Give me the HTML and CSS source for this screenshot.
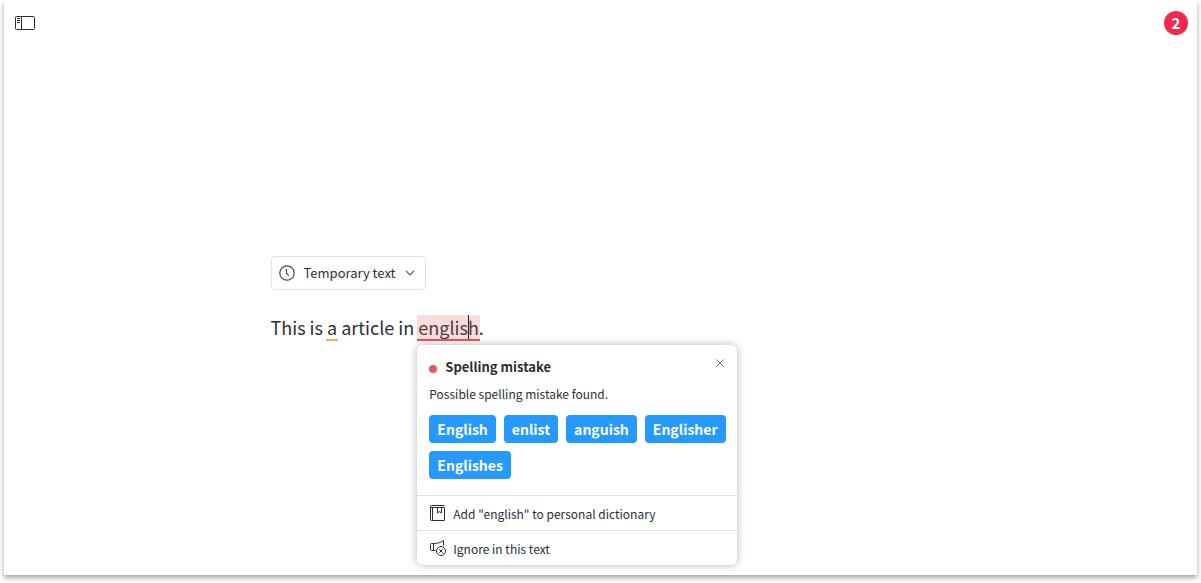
FILE: index.html
```html
<!DOCTYPE html>
<html lang="en">
<head>
    <meta charset="UTF-8">
    <meta name="viewport" content="width=device-width, initial-scale=1.0">
    <title>Temporary text</title>
    <link rel="stylesheet" href="styles.css">
</head>
<body>

    <div class="sheet">
        <header class="topbar">
            <button type="button" class="sidebar-btn" aria-label="Toggle sidebar">
                <svg width="20" height="14" viewBox="0 0 20 14" fill="none" stroke="#2b2f33">
                    <rect x="0.5" y="0.5" width="19" height="13" rx="1"/>
                    <path d="M6.5 0.5v13M2 2.5h3M2 4.5h3M2 6.5h3"/>
                </svg>
            </button>
            <button type="button" class="error-count" aria-label="2 mistakes">2</button>
        </header>

        <main class="editor">
            <button type="button" class="text-picker">
                <svg width="16" height="16" viewBox="0 0 16 16" fill="none" stroke="#45484d" stroke-width="1.2">
                    <circle cx="8" cy="8" r="7.2"/>
                    <path d="M7.5 4v4.2l2.3 2.4"/>
                </svg>
                <span class="picker-label">Temporary text</span>
                <svg width="10" height="6" viewBox="0 0 10 6" fill="none" stroke="#555" stroke-width="1.2">
                    <path d="M1 0.8l4 4 4-4"/>
                </svg>
            </button>

            <div class="text">
                This is <span class="mark grammar">a</span> article in <span class="word"><span class="mark spelling">englis<span class="caret"></span>h</span><section class="popover" aria-label="Spelling mistake">
                        <div class="popover-body">
                            <div class="popover-header">
                                <span class="dot"></span>
                                <h2>Spelling mistake</h2>
                                <button type="button" class="close-btn" aria-label="Close">
                                    <svg width="8" height="8" viewBox="0 0 8 8" fill="none" stroke="#777">
                                        <path d="M0.5 0.5l7 7M7.5 0.5l-7 7"/>
                                    </svg>
                                </button>
                            </div>
                            <p>Possible spelling mistake found.</p>
                            <div class="suggestions">
                                <button type="button">English</button>
                                <button type="button">enlist</button>
                                <button type="button">anguish</button>
                                <button type="button">Englisher</button>
                                <button type="button">Englishes</button>
                            </div>
                        </div>
                        <button type="button" class="action">
                            <svg width="16" height="16" viewBox="0 0 16 16" fill="none" stroke="#2b2f33">
                                <path d="M14.5 0.5h-13a1 1 0 0 0-1 1v13a1 1 0 0 0 1 1h13v-13h-13.500M2.500 2.500v13M7.500 2.500v5.500l2-1.500 2 1.500v-5.500"/>
                            </svg>
                            Add "english" to personal dictionary
                        </button>
                        <button type="button" class="action">
                            <svg width="16" height="16" viewBox="0 0 16 16" fill="none" stroke="#2b2f33">
                                <path d="M3.5 3.5h-2q-1 0-1 1v5q0 1 1 1h2zM3.5 3.5c4.500 0 7-1 10-3v5M3.500 10.500h2"/>
                                <circle cx="11" cy="11" r="4.500"/>
                                <path d="M9.200 9.200l3.600 3.600M12.800 9.200l-3.600 3.600"/>
                            </svg>
                            Ignore in this text
                        </button>
                    </section></span>.
            </div>
        </main>
    </div>

</body>
</html>
```
FILE: styles.css
```css
* {
    box-sizing: border-box;
}
body {
    margin: 0;
    padding: 0 4px 8px;
    min-height: 100vh;
    display: flex;
    background-color: #fff;
    color: #2b2f33;
    font-family: "Noto Sans CJK SC", "Noto Sans", sans-serif;
}
button {
    margin: 0;
    padding: 0;
    border: none;
    background: none;
    color: inherit;
    font-family: inherit;
    cursor: pointer;
}
svg {
    display: block;
    flex-shrink: 0;
}
.sheet {
    flex: 1;
    background-color: #fff;
    box-shadow: 0 3px 5px rgba(0, 0, 0, 0.35);
}
.topbar {
    display: flex;
    justify-content: space-between;
    align-items: center;
    height: 46px;
    padding: 0 9px 0 11px;
}
.error-count {
    width: 24px;
    height: 24px;
    border-radius: 50%;
    background-color: #f0284f;
    color: #fff;
    font-size: 15px;
    font-weight: bold;
    line-height: 24px;
}
.editor {
    max-width: 660px;
    margin: 0 auto;
    padding-top: 210px;
}
.text-picker {
    display: flex;
    align-items: center;
    height: 34px;
    padding: 0 10px 0 7px;
    border: 1px solid #dfe1ee;
    border-radius: 4px;
    font-size: 13px;
}
.picker-label {
    margin: 0 10px 0 9px;
    padding-bottom: 2px;
}
.text {
    margin-top: 25px;
    font-size: 18px;
    line-height: 24px;
}
.mark {
    display: inline-block;
    height: 26px;
    padding: 0 1px;
    margin: 0 -1px;
    line-height: 24px;
    vertical-align: top;
}
.grammar {
    border-bottom: 2px solid #f3b04a;
}
.spelling {
    background-color: #fbdcdc;
    border-bottom: 2px solid #e7555b;
    color: #523b40;
}
.caret {
    display: inline-block;
    width: 1px;
    height: 24px;
    margin-right: -1px;
    background-color: #222;
    vertical-align: top;
}
.word {
    position: relative;
}

/* Suggestion card under the marked word */
.popover {
    position: absolute;
    top: 100%;
    left: -1px;
    width: 320px;
    margin-top: 5px;
    border-radius: 6px;
    background-color: #fff;
    box-shadow: 0 0 8px rgba(0, 0, 0, 0.3);
    font-size: 12px;
    line-height: 20px;
}
.popover-body {
    padding: 12px 8px 16px 12px;
}
.popover-header {
    display: flex;
    align-items: center;
    gap: 8px;
}
.popover-header h2 {
    flex: 1;
    margin: 0;
    font-size: 13px;
    line-height: 20px;
}
.dot {
    width: 8px;
    height: 8px;
    margin-top: 4px;
    border-radius: 50%;
    background-color: #e9595c;
}
.close-btn {
    padding: 6px 5px 14px;
    margin: -10px 0;
}
.popover p {
    margin: 7px 0 11px;
}
.suggestions {
    display: flex;
    flex-wrap: wrap;
    gap: 8px;
}
.suggestions button {
    height: 28px;
    padding: 0 8px;
    border-radius: 4px;
    background-color: #2699ff;
    color: #fff;
    font-size: 14px;
    font-weight: bold;
    line-height: 28px;
}
.action {
    display: flex;
    align-items: center;
    gap: 7px;
    width: 100%;
    height: 35px;
    padding: 0 13px;
    border-top: 1px solid #dcdfeb;
    font-size: 12px;
}
```
